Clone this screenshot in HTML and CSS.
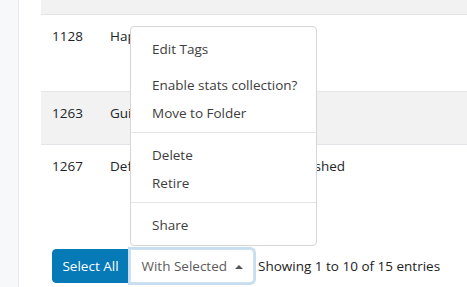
FILE: index.html
```html
<!DOCTYPE html>
<html lang="en">
<head>
    <meta charset="UTF-8">
    <title>Layouts</title>
    <link rel="stylesheet" href="styles.css">
</head>
<body>
    <div class="sidebar"></div>
    <div class="content">
        <table class="grid">
            <tr class="head"><td class="col-id"></td><td class="col-name"></td><td></td></tr>
            <tr class="row-a"><td>1128</td><td>Happy Holidays</td><td></td></tr>
            <tr class="row-b striped"><td>1263</td><td>Guide</td><td></td></tr>
            <tr class="row-c"><td>1267</td><td>Default</td><td>Published</td></tr>
        </table>

        <div class="footer">
            <div class="btn-group">
                <button class="btn btn-primary">Select All</button>
                <button class="btn btn-default focus">With Selected <span class="caret"></span></button>
                <ul class="menu">
                    <li class="first">Edit Tags</li>
                    <li>Enable stats collection?</li>
                    <li>Move to Folder</li>
                    <li class="divider"></li>
                    <li>Delete</li>
                    <li>Retire</li>
                    <li class="divider"></li>
                    <li>Share</li>
                </ul>
            </div>
            <div class="info">Showing 1 to 10 of 15 entries</div>
        </div>
    </div>
</body>
</html>
```

FILE: styles.css
```css
body {
    margin: 0;
    display: flex;
    height: 287px;
    overflow: hidden;
    font-family: "Open Sans", "Noto Sans", sans-serif;
    font-size: 13.5px;
    color: #212529;
    background: #fff;
}

.sidebar {
    width: 18px;
    flex: none;
    background: #f7f8fa;
    border-right: 1px solid #e6e8eb;
}

.content {
    flex: 1;
    padding-left: 22px;
}

.grid {
    width: 100%;
    border-collapse: collapse;
    table-layout: fixed;
}

.grid td {
    padding: 11px 11px 0;
    line-height: 20px;
    vertical-align: top;
    border-bottom: 1px solid #e3e5e8;
    white-space: nowrap;
}

.grid .col-id {
    width: 36px;
}

.grid .col-name {
    width: 151px;
}

.head td {
    height: 14px;
    padding: 0 11px;
    background: #f2f2f2;
}

.row-a td {
    height: 65px;
}

.row-b td {
    height: 41px;
}

.row-c td {
    height: 80px;
    border-bottom: none;
}

.striped td {
    background: #f2f2f2;
}

.footer {
    display: flex;
    align-items: center;
    gap: 4px;
    padding: 13px 0 0 11px;
}

.btn-group {
    position: relative;
    display: flex;
}

.btn {
    height: 34px;
    padding: 0;
    font-family: inherit;
    font-size: 13.5px;
    white-space: nowrap;
    border: 1px solid transparent;
}

.btn-primary {
    width: 77px;
    background: #0679b7;
    border-color: #0679b7;
    color: #fff;
    border-radius: 4px 0 0 4px;
}

.btn-default {
    width: 124px;
    margin-left: 1px;
    background: #fff;
    color: #5c5c5c;
    border-color: #cfe2f0;
    border-radius: 0 4px 4px 0;
}

.btn-default.focus {
    box-shadow: 0 0 0 2px #c6deef;
}

.caret {
    display: inline-block;
    margin-left: 4px;
    vertical-align: 2px;
    border-left: 4px solid transparent;
    border-right: 4px solid transparent;
    border-bottom: 4px solid #555;
}

.menu {
    position: absolute;
    left: 78px;
    bottom: 100%;
    width: 185px;
    margin: 0 0 3px;
    padding: 8px 0 6px;
    list-style: none;
    background: #fff;
    border: 1px solid #d6d6d6;
    border-radius: 4px;
    color: #3d3d3d;
}

.menu li {
    padding: 0 21px;
    line-height: 28px;
    white-space: nowrap;
}

.menu li.first {
    margin-bottom: 8px;
}

.menu li.divider {
    height: 1px;
    margin: 5px 0 8px;
    padding: 0;
    background: #e5e5e5;
}

.info {
    color: #222;
}
```
